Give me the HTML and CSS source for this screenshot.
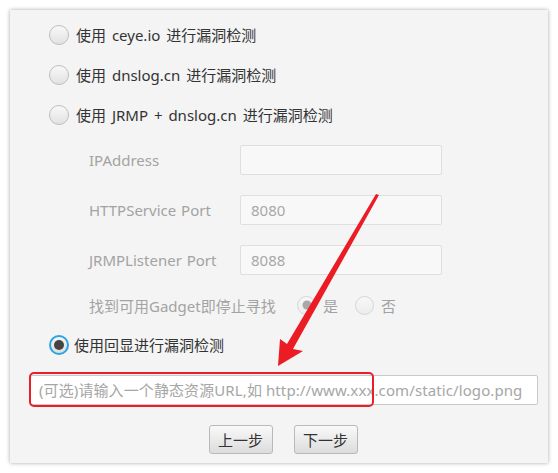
FILE: index.html
```html
<!DOCTYPE html>
<html lang="zh-CN">
<head>
<meta charset="utf-8">
<title>漏洞检测</title>
<link rel="stylesheet" href="styles.css">
</head>
<body>
<div class="panel">
  <div class="options">
    <label class="radio-row"><span class="radio"></span><span class="rtext">使用 ceye.io 进行漏洞检测</span></label>
    <label class="radio-row"><span class="radio"></span><span class="rtext">使用 dnslog.cn 进行漏洞检测</span></label>
    <label class="radio-row"><span class="radio"></span><span class="rtext">使用 JRMP + dnslog.cn 进行漏洞检测</span></label>
  </div>
  <div class="subform">
    <div class="field"><span class="flabel">IPAddress</span><span class="finput"></span></div>
    <div class="field"><span class="flabel">HTTPService Port</span><span class="finput">8080</span></div>
    <div class="field"><span class="flabel">JRMPListener Port</span><span class="finput">8088</span></div>
    <div class="gadget">
      <span class="glabel">找到可用Gadget即停止寻找</span>
      <span class="gopt"><span class="radio small checked-disabled"></span><span class="gtext">是</span></span>
      <span class="gopt"><span class="radio small"></span><span class="gtext">否</span></span>
    </div>
  </div>
  <label class="radio-row echo"><span class="radio selected"></span><span class="rtext">使用回显进行漏洞检测</span></label>
  <div class="url-wrap">
    <div class="url-input">(可选)请输入一个静态资源URL,如 http://www.xxx.com/static/logo.png</div>
    <div class="highlight"></div>
  </div>
  <div class="buttons">
    <button class="btn">上一步</button>
    <button class="btn">下一步</button>
  </div>
</div>
<svg class="arrow" width="558" height="473" viewBox="0 0 558 473" xmlns="http://www.w3.org/2000/svg">
  <polygon points="278,366 280,339 287,344 376,194 379,195 293,349 303,351" fill="#ec1c24"/>
</svg>
</body>
</html>
```
FILE: styles.css
```css
html, body {
  margin: 0;
  padding: 0;
  background: #ffffff;
}
body {
  width: 558px;
  height: 473px;
  position: relative;
  overflow: hidden;
  font-family: "Noto Sans", "Noto Sans CJK SC", sans-serif;
  font-size: 15px;
  color: #333333;
}
.panel {
  position: relative;
  margin: 10px 0 0 10px;
  width: 538px;
  height: 453px;
  background: #f4f4f4;
  box-shadow: 0 0 4px rgba(0, 0, 0, 0.35);
  box-sizing: border-box;
  padding-top: 5px;
  display: flex;
  flex-direction: column;
}
.options {
  display: flex;
  flex-direction: column;
}
.radio-row {
  display: flex;
  align-items: center;
  height: 40px;
  padding-left: 39px;
}
.radio {
  width: 20px;
  height: 20px;
  box-sizing: border-box;
  border-radius: 50%;
  border: 1px solid #bdbdbd;
  background: linear-gradient(#f8f8f8, #e2e2e2);
  flex: none;
  position: relative;
}
.radio.small {
  width: 19px;
  height: 19px;
  border-color: #d6d6d6;
  background: linear-gradient(#f8f8f8, #ececec);
}
.radio.selected {
  border: 2px solid #2aa4e3;
  background: linear-gradient(#f6f6f6, #dedede);
}
.radio.selected::after,
.radio.checked-disabled::after {
  content: "";
  position: absolute;
  width: 10px;
  height: 10px;
  border-radius: 50%;
  background: #444444;
  left: 50%;
  top: 50%;
  transform: translate(-50%, -50%);
}
.radio.checked-disabled::after {
  width: 9px;
  height: 9px;
  background: #a8a8a8;
}
.rtext {
  margin-left: 7px;
  line-height: 20px;
  word-spacing: 2px;
}
.echo .rtext {
  margin-left: 5px;
}
.subform {
  margin-top: 10px;
  padding-left: 79px;
  display: flex;
  flex-direction: column;
  color: #a3a3a3;
}
.field {
  display: flex;
  align-items: center;
  height: 30px;
  margin-bottom: 20px;
}
.flabel {
  width: 151px;
  word-spacing: 1px;
}
.finput {
  width: 202px;
  height: 30px;
  box-sizing: border-box;
  border: 1px solid #dfdfdf;
  border-radius: 2px;
  background: #f8f8f8;
  padding-left: 10px;
  line-height: 28px;
  color: #a8a8a8;
}
.gadget {
  display: flex;
  align-items: center;
  height: 30px;
  margin-top: -5px;
}
.glabel {
  width: 208px;
}
.gopt {
  display: flex;
  align-items: center;
  margin-right: 17px;
}
.gtext {
  margin-left: 7px;
}
.echo {
  margin-top: 5px;
}
.url-wrap {
  position: relative;
  margin: 10px 10px 0 20px;
}
.url-input {
  height: 30px;
  box-sizing: border-box;
  border: 1px solid #c9c9c9;
  border-radius: 2px;
  background: #ffffff;
  padding-left: 8px;
  line-height: 28px;
  color: #a6a6a6;
  white-space: nowrap;
  overflow: hidden;
  letter-spacing: 0.1px;
}
.highlight {
  position: absolute;
  left: -1px;
  top: -3px;
  width: 345px;
  height: 35px;
  box-sizing: border-box;
  border: 2px solid #e8202a;
  border-radius: 5px;
}
.buttons {
  display: flex;
  justify-content: center;
  gap: 21px;
  margin-top: 20px;
  padding-left: 8px;
}
.btn {
  width: 64px;
  height: 29px;
  box-sizing: border-box;
  border: 1px solid #b9b9b9;
  border-radius: 3px;
  background: linear-gradient(#f9f9f9, #dcdcdc);
  font-family: "Noto Sans CJK SC", "Noto Sans", sans-serif;
  font-size: 15px;
  color: #333333;
  padding: 0;
}
.arrow {
  position: absolute;
  left: 0;
  top: 0;
  pointer-events: none;
}
```
